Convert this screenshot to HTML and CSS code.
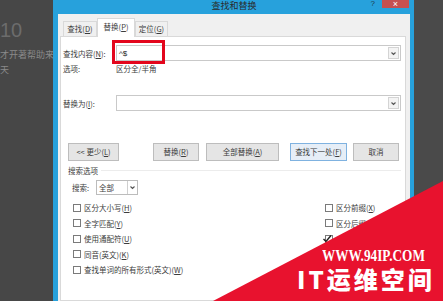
FILE: index.html
```html
<!DOCTYPE html>
<html lang="zh-CN">
<head>
    <meta charset="UTF-8">
    <title>查找和替换</title>
    <link rel="stylesheet" href="styles.css">
</head>
<body>
<div class="page">
    <div class="desk-left">
        <div class="big-num">10</div>
        <div class="desk-line">才开著帮助来</div>
        <div class="desk-line second">天</div>
    </div>

    <div class="dialog">
        <div class="titlebar">
            <span></span>
            <span class="title">查找和替换</span>
            <div class="title-btns">
                <span class="help">?</span>
                <span class="close">×</span>
            </div>
        </div>

        <div class="dialog-body">
            <div class="tabs">
                <div class="tab tab-find">查找(<u>D</u>)</div>
                <div class="tab tab-active">替换(<u>P</u>)</div>
                <div class="tab tab-goto">定位(<u>G</u>)</div>
            </div>

            <div class="panel">
                <div class="field-row find-row">
                    <label class="field-label">查找内容(<u>N</u>):</label>
                    <div class="combo">
                        <span class="combo-text">^$</span>
                        <span class="combo-arrow">
                            <svg width="9" height="11" viewBox="0 0 9 11"><path d="M2.5 4.5 L4.5 6.5 L6.5 4.5" fill="none" stroke="#555" stroke-width="1.1"/></svg>
                        </span>
                    </div>
                    <div class="highlight"></div>
                </div>

                <div class="option-row">
                    <span class="field-label">选项:</span>
                    <span>区分全/半角</span>
                </div>

                <div class="field-row replace-row">
                    <label class="field-label">替换为(<u>I</u>):</label>
                    <div class="combo">
                        <span class="combo-text"></span>
                        <span class="combo-arrow">
                            <svg width="9" height="11" viewBox="0 0 9 11"><path d="M2.5 4.5 L4.5 6.5 L6.5 4.5" fill="none" stroke="#555" stroke-width="1.1"/></svg>
                        </span>
                    </div>
                </div>

                <div class="button-row">
                    <div class="btn btn-less">&lt;&lt; 更少(<u>L</u>)</div>
                    <div class="btn btn-replace">替换(<u>R</u>)</div>
                    <div class="btn btn-all">全部替换(<u>A</u>)</div>
                    <div class="btn btn-next">查找下一处(<u>F</u>)</div>
                    <div class="btn btn-cancel">取消</div>
                </div>

                <div class="section-head">
                    <span>搜索选项</span>
                    <span class="rule"></span>
                </div>

                <div class="search-row">
                    <span class="search-label">搜索:</span>
                    <div class="select">
                        <span class="select-text">全部</span>
                        <span class="select-arrow">
                            <svg width="9" height="13" viewBox="0 0 9 13"><path d="M2.5 5.5 L4.5 7.5 L6.5 5.5" fill="none" stroke="#555" stroke-width="1.1"/></svg>
                        </span>
                    </div>
                </div>

                <div class="checks">
                    <div class="check-col">
                        <div class="check"><span class="box"></span>区分大小写(<u>H</u>)</div>
                        <div class="check"><span class="box"></span>全字匹配(<u>Y</u>)</div>
                        <div class="check"><span class="box"></span>使用通配符(<u>U</u>)</div>
                        <div class="check"><span class="box"></span>同音(英文)(<u>K</u>)</div>
                        <div class="check"><span class="box"></span>查找单词的所有形式(英文)(<u>W</u>)</div>
                    </div>
                    <div class="check-col check-col-right">
                        <div class="check"><span class="box"></span>区分前缀(<u>X</u>)</div>
                        <div class="check"><span class="box"></span>区分后缀(<u>T</u>)</div>
                        <div class="check"><span class="box checked">
                            <svg width="10" height="10" viewBox="0 0 10 10"><path d="M0.5 5 L3 7.5 L8 1.5" fill="none" stroke="#222" stroke-width="1.4"/></svg>
                        </span></div>
                    </div>
                </div>
            </div>
        </div>
    </div>

    <div class="desk-right"></div>

    <div class="watermark">
        <svg class="wm-shape" width="443" height="301" viewBox="0 0 443 301"><polygon points="213,301 443,181 443,301" fill="#e8122e"/></svg>
        <div class="wm-url">WWW.94IP.COM</div>
        <div class="wm-name">IT运维空间</div>
    </div>
</div>
</body>
</html>
```

FILE: styles.css
```css
* {
    box-sizing: border-box;
}

body {
    margin: 0;
    background-color: #474747;
    font-family: "Noto Sans CJK SC", "Noto Sans", sans-serif;
    font-size: 7.5px;
    color: #3c3c3c;
}

u {
    text-decoration: underline;
}

.page {
    position: relative;
    display: flex;
    width: 443px;
    height: 301px;
    overflow: hidden;
}

/* desktop behind the dialog */
.desk-left {
    width: 53px;
    padding-top: 20px;
    overflow: hidden;
    white-space: nowrap;
    background-color: #474747;
}

.big-num {
    font-family: "Liberation Sans", sans-serif;
    font-size: 20px;
    line-height: 20px;
    color: #6c6c6c;
}

.desk-line {
    font-size: 9px;
    line-height: 12px;
    color: #8a8a8a;
    margin-top: 9px;
}

.desk-line.second {
    margin-top: 3px;
}

.desk-right {
    flex: 1;
    background-color: #4a4a4a;
}

/* dialog */
.dialog {
    width: 361px;
    display: flex;
    flex-direction: column;
    border-left: 5px solid #27a1dc;
    border-right: 4px solid #27a1dc;
    background-color: #f0f0f0;
}

.titlebar {
    height: 14px;
    background-color: #27a1dc;
    display: grid;
    grid-template-columns: 1fr auto 1fr;
    align-items: start;
}

.title {
    font-size: 9px;
    line-height: 12px;
    color: #2a2a2a;
}

.title-btns {
    justify-self: end;
    display: flex;
    align-items: flex-start;
}

.help {
    font-family: "Liberation Sans", sans-serif;
    font-size: 8px;
    line-height: 8px;
    color: #1e3a4a;
}

.close {
    width: 27px;
    height: 8px;
    margin-left: 7px;
    margin-right: 1px;
    background-color: #c75050;
    color: #fff;
    font-family: "Liberation Sans", sans-serif;
    font-size: 9px;
    line-height: 8px;
    text-align: center;
}

.dialog-body {
    flex: 1;
    display: flex;
    flex-direction: column;
    padding: 0 4px 0 2px;
}

.tabs {
    height: 22px;
    display: flex;
    align-items: flex-end;
    padding-left: 3px;
}

.tab {
    height: 15px;
    border: 1px solid #d9d9d9;
    border-bottom: none;
    background-color: #f0f0f0;
    line-height: 13px;
    text-align: center;
    color: #3c3c3c;
}

.tab-find {
    width: 34px;
}

.tab-active {
    position: relative;
    z-index: 1;
    width: 38px;
    height: 19px;
    margin-bottom: -1px;
    background-color: #fff;
    line-height: 15px;
}

.tab-goto {
    width: 33px;
}

.panel {
    flex: 1;
    background-color: #fff;
    border: 1px solid #d9d9d9;
}

.field-row {
    position: relative;
    display: flex;
    align-items: center;
    height: 16px;
    padding-left: 2px;
}

.find-row {
    margin-top: 8px;
}

.replace-row {
    margin-top: 21px;
}

.field-label {
    width: 53px;
    white-space: nowrap;
}

.combo {
    width: 285px;
    height: 16px;
    border: 1px solid #c9c9c9;
    display: flex;
    align-items: center;
    justify-content: space-between;
    padding: 0 1px 0 2px;
}

.combo-text {
    font-family: "Liberation Sans", sans-serif;
    font-size: 8px;
    color: #222;
}

.combo-arrow {
    width: 11px;
    height: 12px;
    border: 1px solid #d4d4d4;
    background-color: #f4f4f4;
    display: flex;
    align-items: center;
    justify-content: center;
}

/* red annotation around the search text */
.highlight {
    position: absolute;
    left: 51px;
    top: -5px;
    width: 53px;
    height: 24px;
    border: 3px solid #e3061c;
}

.option-row {
    display: flex;
    height: 10px;
    line-height: 10px;
    margin-top: 3px;
    padding-left: 2px;
}

.button-row {
    display: flex;
    height: 18px;
    margin-top: 32px;
    padding-left: 7px;
}

.btn {
    height: 18px;
    border: 1px solid #bdbdbd;
    background-color: #e5e5e5;
    line-height: 16px;
    text-align: center;
    white-space: nowrap;
}

.btn-less {
    width: 51px;
}

.btn-replace {
    width: 46px;
    margin-left: 34px;
}

.btn-all {
    width: 73px;
    margin-left: 7px;
}

.btn-next {
    width: 57px;
    margin-left: 11px;
    border-color: #7fb2e0;
    background-color: #e6eef7;
}

.btn-cancel {
    width: 46px;
    margin-left: 6px;
}

.section-head {
    display: flex;
    align-items: center;
    height: 10px;
    margin-top: 4px;
    padding-left: 7px;
    padding-right: 4px;
}

.rule {
    flex: 1;
    height: 1px;
    margin-left: 3px;
    background-color: #ececec;
}

.search-row {
    display: flex;
    align-items: center;
    height: 15px;
    margin-top: 5px;
    padding-left: 11px;
}

.search-label {
    width: 24px;
}

.select {
    width: 42px;
    height: 15px;
    border: 1px solid #bcbcbc;
    display: flex;
    align-items: center;
    justify-content: space-between;
    padding-left: 2px;
}

.select-arrow {
    width: 10px;
    height: 13px;
    border-left: 1px solid #cfcfcf;
    display: flex;
    align-items: center;
    justify-content: center;
}

.checks {
    display: flex;
    margin-top: 5px;
}

.check-col {
    width: 264px;
    padding-left: 12px;
}

.check-col-right {
    width: auto;
    padding-left: 0;
}

.check {
    display: flex;
    align-items: center;
    height: 15.5px;
    white-space: nowrap;
}

.box {
    width: 8px;
    height: 8px;
    border: 1px solid #7a7a7a;
    background-color: #fff;
    margin-right: 3px;
    flex-shrink: 0;
    display: flex;
    align-items: center;
    justify-content: center;
}

.box svg {
    flex-shrink: 0;
    margin-left: -2px;
}

/* watermark in the corner */
.watermark {
    position: absolute;
    left: 0;
    top: 0;
    width: 443px;
    height: 301px;
}

.wm-shape {
    display: block;
}

.wm-url {
    position: absolute;
    left: 322px;
    top: 249px;
    font-family: "Liberation Serif", serif;
    font-weight: bold;
    font-size: 17px;
    line-height: 14px;
    color: #fff;
    transform: scaleX(0.78);
    transform-origin: left top;
    white-space: nowrap;
}

.wm-name {
    position: absolute;
    left: 297px;
    top: 267px;
    font-family: "Noto Sans CJK SC", sans-serif;
    font-weight: 900;
    font-size: 24px;
    line-height: 24px;
    letter-spacing: 3px;
    color: #fff;
    white-space: nowrap;
}
```
